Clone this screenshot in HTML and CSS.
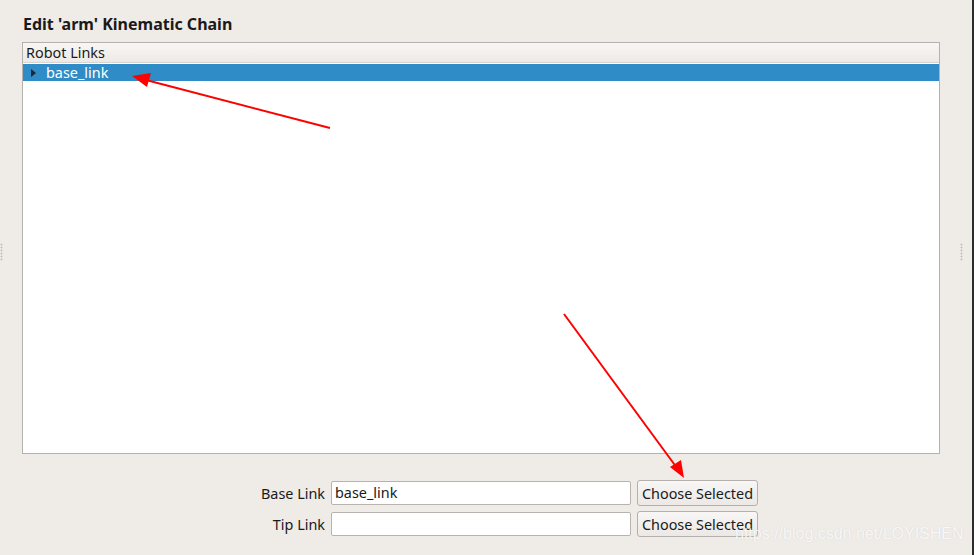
FILE: index.html
```html
<!DOCTYPE html>
<html>
<head>
<meta charset="utf-8">
<link rel="stylesheet" href="styles.css">
</head>
<body>
<div class="window">
  <div class="content">
    <h1 class="title">Edit 'arm' Kinematic Chain</h1>
    <div class="tree">
      <div class="tree-header">Robot Links</div>
      <div class="tree-row selected">
        <span class="branch"></span>
        <span class="row-text">base_link</span>
      </div>
    </div>
    <div class="form">
      <label class="form-label">Base Link</label>
      <div class="input">base_link</div>
      <button class="btn">Choose Selected</button>
      <label class="form-label">Tip Link</label>
      <div class="input"></div>
      <button class="btn">Choose Selected</button>
    </div>
  </div>
  <span class="handle handle-left"></span>
  <span class="handle handle-right"></span>
  <svg class="annotations" width="974" height="555" viewBox="0 0 974 555">
    <line x1="330" y1="128" x2="146" y2="80" stroke="#ff0000" stroke-width="2"/>
    <polygon points="132,76 151,73 147,87" fill="#ff0000"/>
    <line x1="564" y1="314" x2="677" y2="468" stroke="#ff0000" stroke-width="2"/>
    <polygon points="684,478 670,467 681,460" fill="#ff0000"/>
  </svg>
  <div class="watermark">https://blog.csdn.net/LOYISHEN</div>
</div>
</body>
</html>
```
FILE: styles.css
```css
html, body {
  margin: 0;
  padding: 0;
}
body {
  width: 974px;
  height: 555px;
  overflow: hidden;
  background: #efebe7;
  font-family: "Noto Sans", "Open Sans", sans-serif;
  font-size: 14.4px;
  color: #1a1a1a;
}
.window {
  position: relative;
  width: 972px;
  height: 555px;
  border-right: 2px solid #2c2c2c;
}
.content {
  padding: 13px 32px 0 22px;
}
.title {
  margin: 0 0 6px 1px;
  font-size: 16px;
  font-weight: 700;
  line-height: 23px;
  color: #1a1a1a;
}
.tree {
  height: 410px;
  border: 1px solid #b5b1ac;
  background: #ffffff;
}
.tree-header {
  height: 19px;
  line-height: 20px;
  padding-left: 3px;
  background: linear-gradient(#f9f7f5, #ece9e6);
  border-bottom: 1px solid #d8d4cf;
}
.tree-row {
  display: flex;
  align-items: center;
  height: 17px;
  margin-top: 1px;
}
.tree-row.selected {
  background: #308cc6;
  color: #ffffff;
}
.branch {
  width: 0;
  height: 0;
  margin-left: 8px;
  border-top: 4px solid transparent;
  border-bottom: 4px solid transparent;
  border-left: 5px solid #1c2733;
}
.row-text {
  margin-left: 10px;
  line-height: 17px;
}
.form {
  display: grid;
  grid-template-columns: 90px 300px 121px;
  column-gap: 6px;
  row-gap: 5px;
  align-items: center;
  margin: 26px 0 0 213px;
  width: 529px;
}
.form-label {
  text-align: right;
}
.input {
  height: 22px;
  line-height: 22px;
  padding: 0 3px;
  background: #ffffff;
  border: 1px solid #b8b3ae;
  border-radius: 2px;
}
.btn {
  height: 26px;
  padding: 0;
  font-family: inherit;
  font-size: 14.4px;
  color: #1a1a1a;
  background: linear-gradient(#f8f7f6, #ebe8e5);
  border: 1px solid #b5b0ab;
  border-radius: 3px;
}
.handle {
  position: absolute;
  top: 243px;
  width: 3px;
  height: 18px;
  background: radial-gradient(circle, #c4c0bb 0.8px, transparent 1.2px) 0 0 / 3px 3px;
}
.handle-left { left: 0; }
.handle-right { left: 960px; }
.annotations {
  position: absolute;
  left: 0;
  top: 0;
}
.watermark {
  position: absolute;
  left: 735px;
  top: 525px;
  font-family: "Liberation Sans", Arial, sans-serif;
  font-size: 16px;
  color: rgba(255, 255, 255, 0.85);
  text-shadow: 0 0 1px rgba(170, 170, 170, 0.45);
}
```
